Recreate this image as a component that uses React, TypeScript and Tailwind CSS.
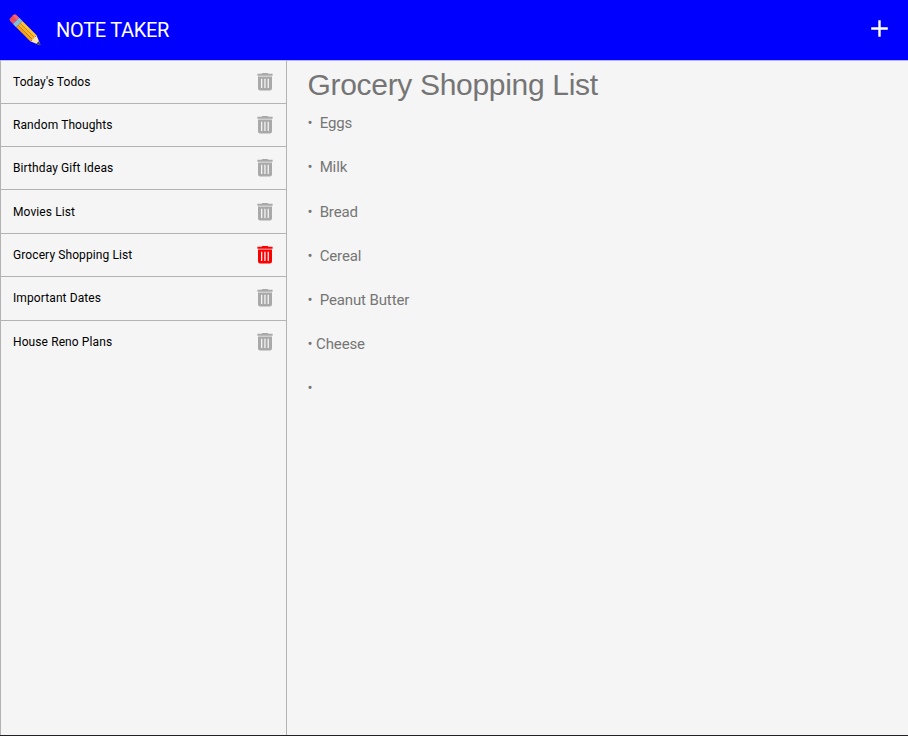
import React from "react";

const notes = [
  { title: "Today's Todos", height: "h-[43px]" },
  { title: "Random Thoughts", height: "h-[43px]" },
  { title: "Birthday Gift Ideas", height: "h-[43px]" },
  { title: "Movies List", height: "h-[44px]" },
  { title: "Grocery Shopping List", height: "h-[43px]" },
  { title: "Important Dates", height: "h-[44px] pb-px" },
  { title: "House Reno Plans", height: "h-[43px] pb-[2px]" },
];

const items = [
  { text: "•  Eggs", height: "h-[44px]" },
  { text: "•  Milk", height: "h-[45px]" },
  { text: "•  Bread", height: "h-[44px]" },
  { text: "•  Cereal", height: "h-[44px]" },
  { text: "•  Peanut Butter", height: "h-[44px]" },
  { text: "• Cheese", height: "h-[44px]" },
  { text: "•", height: "h-[44px]" },
];

function Trash({ active }: { active: boolean }) {
  return (
    <svg
      width="16"
      height="18"
      viewBox="0 0 16 18"
      className={active ? "text-[#ff0000]" : "text-[#a9a9a9]"}
      fill="currentColor"
    >
      <path d="M5.2 0h5.6l.5 .8h4.3v1.9H.4V.8H4.7z" />
      <path
        fillRule="evenodd"
        d="M1 3.6h14V15.6a1.8 1.8 0 0 1-1.8 1.8H2.8A1.8 1.8 0 0 1 1 15.6zM4 5.8V15H5.3V5.8zM7.3 5.8V15H8.6V5.8zM10.6 5.8V15H11.9V5.8z"
      />
    </svg>
  );
}

function Pencil() {
  return (
    <svg width="32" height="32" viewBox="0 0 32 32" className="shrink-0">
      <g transform="translate(4.9 4.7) rotate(45) scale(1.01)">
        <path d="M0 -4.3H3V4.3H0Q-3 4.3-3 2V-2Q-3-4.3 0-4.3z" fill="#ed4c5c" />
        <path d="M0 -4.3H3V-1.2H-3V-2Q-3-4.3 0-4.3z" fill="#fa6270" />
        <path d="M3-4.4H7.6V4.4H3z" fill="#8fc4d6" />
        <path d="M4.2-4.4H4.8V4.4H4.2zM6-4.4H6.6V4.4H6z" fill="#7fb0c4" />
        <path d="M7.6-4.3H27.5V-1.4H7.6z" fill="#ffc52e" />
        <path d="M7.6-1.4H28V1.6H7.6z" fill="#ffb414" />
        <path d="M7.6 1.6H27.5V4.3H7.6z" fill="#f5a010" />
        <path d="M27.2-4.3L36.7-.4V.4L27.2 4.3Q28.5 2.8 27.2 1.5Q28.5 0 27.2-1.4Q28.5-2.8 27.2-4.3z" fill="#ffe4ac" />
        <path d="M33.2-1.7L36.7-.4V.4L33.2 1.7z" fill="#3e4347" />
      </g>
    </svg>
  );
}

export default function App() {
  return (
    <div className="flex h-[736px] w-full flex-col overflow-hidden border-b border-[#202124] bg-[#f5f5f5] font-['Roboto','Liberation_Sans',sans-serif]">
      <header className="flex h-[60px] shrink-0 items-center justify-between bg-[#0000ff] pl-[9px] pr-5 text-white">
        <div className="flex items-center">
          <Pencil />
          <h1 className="ml-[15px] text-[20px] font-normal leading-6 tracking-[-0.3px]">NOTE TAKER</h1>
        </div>
        <button type="button" aria-label="New note" className="mb-1">
          <svg width="17" height="17" viewBox="0 0 17 17" fill="none" stroke="currentColor" strokeWidth="2.4">
            <path d="M8.5 .2V16.8M.2 8.5H16.8" />
          </svg>
        </button>
      </header>
      <main className="flex min-h-0 flex-1">
        <aside className="w-[287px] shrink-0 border-x border-t border-x-[#b3b3b3] border-t-[#c0c0e0]">
          <ul>
            {notes.map((note, i) => (
              <li
                key={note.title}
                className={`flex items-center justify-between pl-3 pr-[13px] ${note.height} ${i < notes.length - 1 ? "border-b border-[#b3b3b3]" : ""}`}
              >
                <span className="text-[12px] leading-[18px] tracking-[0.1px] text-black">{note.title}</span>
                <Trash active={i === 4} />
              </li>
            ))}
          </ul>
        </aside>
        <section className="flex-1 border-t border-[#b3b3ff] pl-[20.5px] text-[#757575]">
          <h2 className="mt-[6px] font-['Liberation_Sans',Arial,sans-serif] text-[30px] leading-9 tracking-[-0.31px]">Grocery Shopping List</h2>
          <ul className="-mt-[2px]">
            {items.map((item, i) => (
              <li key={i} className={`whitespace-pre text-[15px] leading-[44px] tracking-[-0.12px] ${item.height}`}>
                {item.text}
              </li>
            ))}
          </ul>
        </section>
      </main>
    </div>
  );
}
